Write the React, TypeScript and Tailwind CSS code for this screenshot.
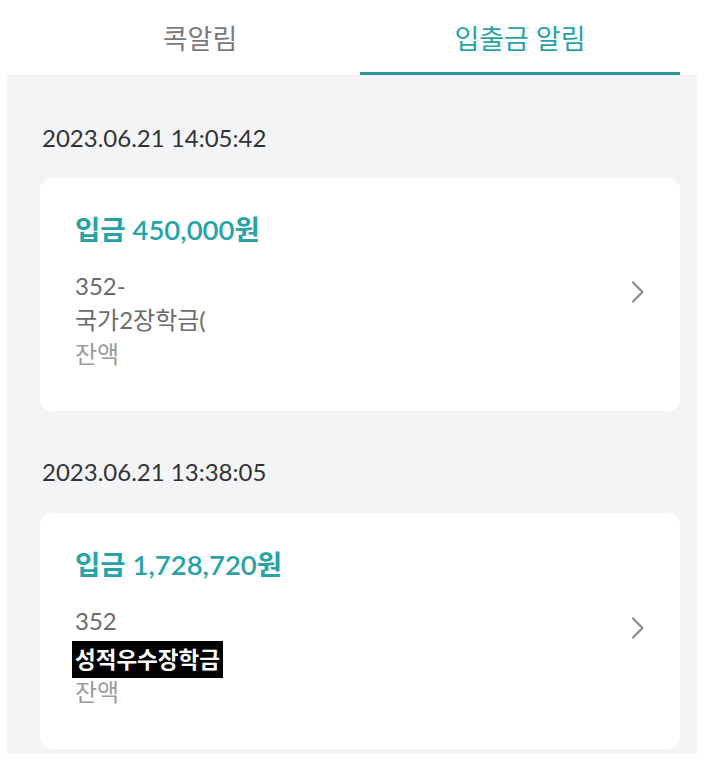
import React from "react";

const font = { fontFamily: '"Lato", "Noto Sans CJK KR", sans-serif' };

function Chevron() {
  return (
    <svg width="14" height="24" viewBox="0 0 14 24" fill="none" className="shrink-0">
      <path d="M2 2.5 L11.5 12 L2 21.5" stroke="#8c8c8c" strokeWidth="2.2" strokeLinecap="round" strokeLinejoin="round" />
    </svg>
  );
}

function Card({
  amount,
  account,
  memo,
  highlight,
}: {
  amount: string;
  account: string;
  memo: string;
  highlight?: boolean;
}) {
  return (
    <div className="bg-white rounded-[12px] flex items-center pl-[35px] pr-[35px] pt-[34px] pb-[40px]">
      <div className="flex-1 flex flex-col">
        <div className="text-[27.5px] leading-[36px] font-semibold text-[#27a3a8]">{amount}</div>
        <div className="mt-[21px] flex flex-col text-[24px] leading-[34px]">
          <div className="text-[#6b6b6b]">{account}</div>
          {highlight ? (
            <div className="flex mt-[3px] h-[37px] mb-[-3px]">
              <span className="bg-black text-white text-[22.5px] font-semibold px-[3px] ml-[-3px] leading-[37px]">{memo}</span>
            </div>
          ) : (
            <div className="text-[#6b6b6b]">{memo}</div>
          )}
          <div className="text-[#9b9b9b]">잔액</div>
        </div>
      </div>
      <Chevron />
    </div>
  );
}

export default function App() {
  return (
    <div className="w-[704px] h-[759px] bg-white pt-[8px] pl-[7px]" style={font}>
      <div className="w-[690px]">
        <div className="bg-white h-[68px] flex pl-[33px] pr-[17px] border-b border-[#ededed]">
          <div className="flex-1 flex items-center justify-center pb-[5px] text-[27px] text-[#7a7a7a]">콕알림</div>
          <div className="flex-1 flex flex-col">
            <div className="flex-1 flex items-center justify-center pb-[2px] text-[27px] text-[#27a3a8]">입출금 알림</div>
            <div className="h-[3px] bg-[#2a96a0]" />
          </div>
        </div>
        <div className="bg-[#f3f4f6] pl-[33px] pr-[17px] pt-[46px] pb-[5px]">
          <div className="pl-[2px] text-[24px] leading-[32px] text-[#333333]">2023.06.21 14:05:42</div>
          <div className="mt-[24px]">
            <Card amount="입금 450,000원" account="352-" memo="국가2장학금(" />
          </div>
          <div className="mt-[45px] pl-[2px] text-[24px] leading-[32px] text-[#333333]">2023.06.21 13:38:05</div>
          <div className="mt-[25px]">
            <Card amount="입금 1,728,720원" account="352" memo="성적우수장학금" highlight />
          </div>
        </div>
      </div>
    </div>
  );
}
